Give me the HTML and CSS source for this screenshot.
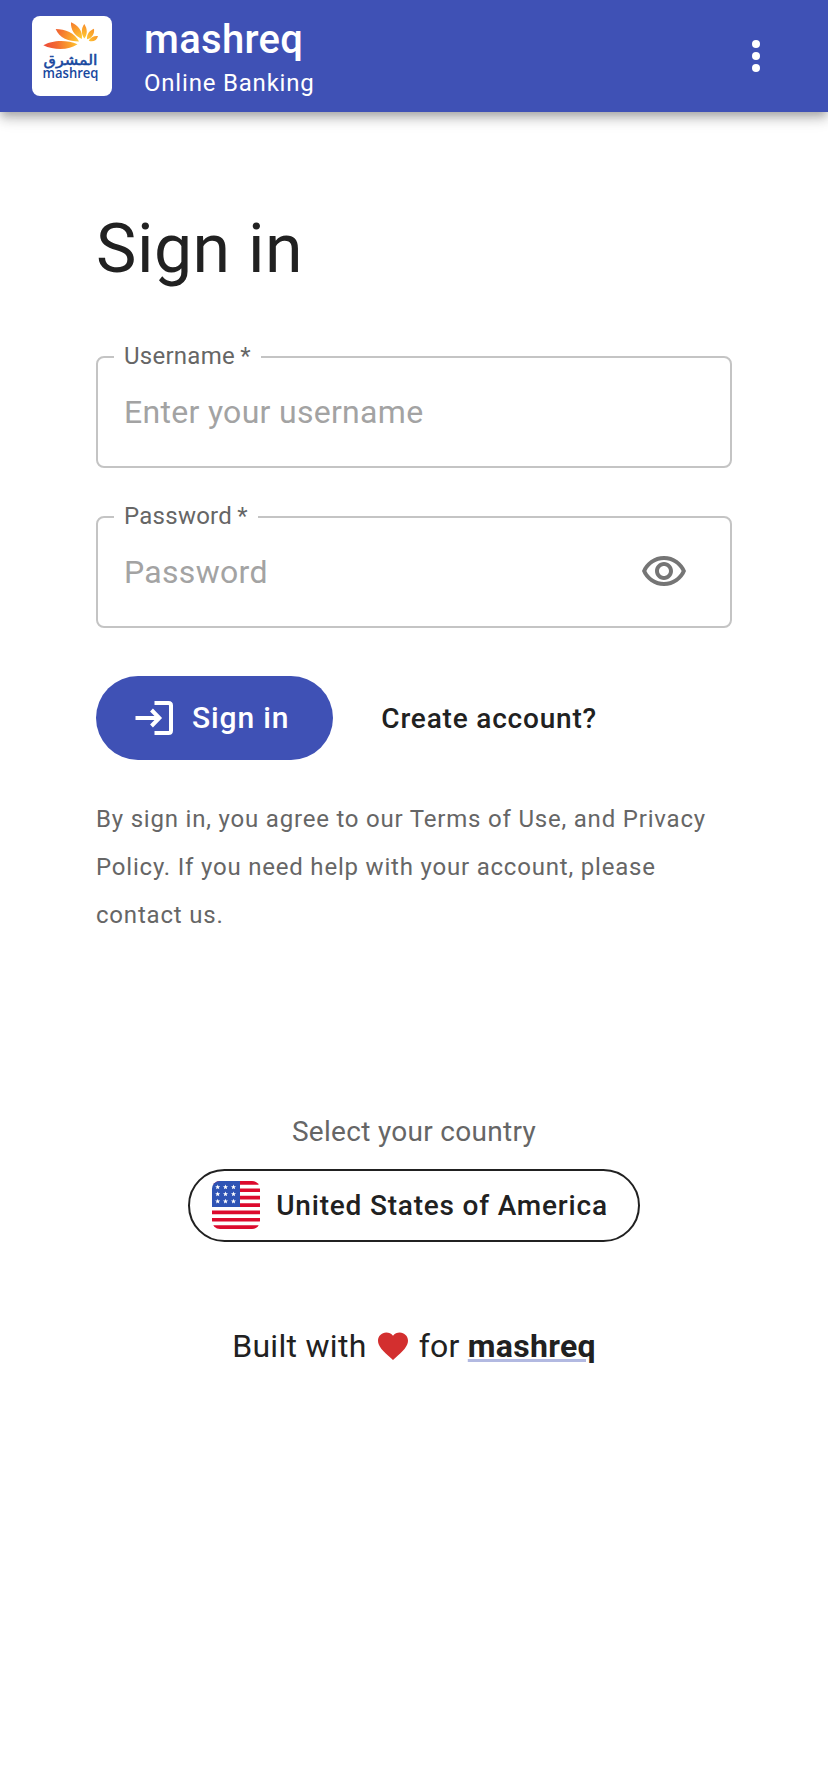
FILE: index.html
```html
<!DOCTYPE html>
<html lang="en">
<head>
<meta charset="utf-8">
<title>mashreq Online Banking</title>
<link rel="stylesheet" href="styles.css">
</head>
<body>
<header class="appbar">
  <svg class="logo" viewBox="32 16 80 80" aria-label="mashreq logo">
    <defs>
      <radialGradient id="flame" gradientUnits="userSpaceOnUse" cx="83" cy="42" r="38">
        <stop offset="0" stop-color="#ffdc3c"/>
        <stop offset=".35" stop-color="#fba22b"/>
        <stop offset=".7" stop-color="#f26a32"/>
        <stop offset="1" stop-color="#ee4e37"/>
      </radialGradient>
    </defs>
    <g fill="url(#flame)">
      <path d="M43.300 45.300C51 40.500 66 39 77.500 44.300C69 50.500 54 50.500 43.300 45.300Z"/>
      <path d="M55.700 29C65 29 75 33 79 41.500C69 41.500 59 38 55.700 29Z"/>
      <path d="M71 22.300C78 25.500 83 31 81.800 39C74.500 35.500 70.500 30 71 22.300Z"/>
      <path d="M84.300 24C87.700 29 87.500 34.500 84.300 38.500C81 34 81 28.500 84.300 24Z"/>
      <path d="M94 28.700C94.700 34 92 38 87 39.300C86.500 34 89.500 30.500 94 28.700Z"/>
      <path d="M98 36C97 40.500 93 42.300 88.700 40.800C90.500 37.300 94 35.500 98 36Z"/>
    </g>
    <text class="logo-ar" x="70.500" y="64.500" text-anchor="middle" textLength="54" lengthAdjust="spacingAndGlyphs">المشرق</text>
    <text class="logo-en" x="42.500" y="78" textLength="56" lengthAdjust="spacingAndGlyphs">mashreq</text>
  </svg>
  <div class="brand">
    <div class="brand-name">mashreq</div>
    <div class="brand-sub">Online Banking</div>
  </div>
  <svg class="more" viewBox="0 0 24 24" aria-label="More"><circle cx="12" cy="6" r="2"/><circle cx="12" cy="12" r="2"/><circle cx="12" cy="18" r="2"/></svg>
</header>
<main class="page">
  <h1 class="heading">Sign in</h1>
  <fieldset class="field">
    <legend class="label"><span class="label-text">Username&thinsp;*</span></legend>
    <span class="placeholder">Enter your username</span>
  </fieldset>
  <fieldset class="field">
    <legend class="label"><span class="label-text">Password&thinsp;*</span></legend>
    <span class="placeholder">Password</span>
    <svg class="eye" viewBox="0 0 24 24"><path d="M12 6c3.790 0 7.170 2.130 8.820 5.500C19.170 14.870 15.790 17 12 17s-7.170-2.130-8.820-5.500C4.830 8.130 8.210 6 12 6m0-2C7 4 2.730 7.110 1 11.500 2.730 15.890 7 19 12 19s9.270-3.110 11-7.500C21.270 7.110 17 4 12 4zm0 5c1.380 0 2.500 1.120 2.500 2.500S13.380 14 12 14s-2.500-1.120-2.500-2.500S10.620 9 12 9m0-2c-2.480 0-4.500 2.020-4.500 4.500S9.520 16 12 16s4.500-2.020 4.500-4.500S14.480 7 12 7z"/></svg>
  </fieldset>
  <div class="actions">
    <button class="primary">
      <svg class="login" viewBox="0 0 40 40"><path d="M20.500 5H34.500Q37 5 37 7.500V32.500Q37 35 34.500 35H20.500M1.500 20H25M17.500 12L25.300 20L17.500 28"/></svg>
      <span class="primary-text">Sign in</span>
    </button>
    <a class="create">Create account?</a>
  </div>
  <p class="terms">By sign in, you agree to our Terms of Use, and Privacy Policy. If you need help with your account, please contact us.</p>
  <div class="country">
    <div class="country-label">Select your country</div>
    <button class="country-button">
      <svg class="flag" viewBox="0 0 48 48">
        <defs>
          <clipPath id="round"><rect width="48" height="48" rx="8"/></clipPath>
          <path id="star" d="M0-2.500L.7-.8 2.500-.7 1.100.5 1.600 2.200 0 1.200-1.600 2.200-1.100.5-2.500-.7-.7-.8Z"/>
        </defs>
        <g clip-path="url(#round)">
          <rect width="48" height="48" fill="#fff"/>
          <path fill="#dc0a2d" d="M0 0H48V3.700H0ZM0 7.400H48V11.100H0ZM0 14.800H48V18.500H0ZM0 22.200H48V25.900H0ZM0 29.500H48V33.200H0ZM0 36.900H48V40.600H0ZM0 44.300H48V48H0Z"/>
          <rect width="28" height="26" fill="#2f54b5"/>
          <g fill="#fff">
            <use href="#star" x="5.700" y="6"/><use href="#star" x="13.500" y="6"/><use href="#star" x="21.500" y="6"/>
            <use href="#star" x="5.700" y="13"/><use href="#star" x="13.500" y="13"/><use href="#star" x="21.500" y="13"/>
            <use href="#star" x="5.700" y="20.300"/><use href="#star" x="13.500" y="20.300"/><use href="#star" x="21.500" y="20.300"/>
          </g>
        </g>
      </svg>
      <span>United States of America</span>
    </button>
  </div>
  <footer class="built">
    <span>Built with</span>
    <svg class="heart" viewBox="0 0 24 24"><path d="m12 21.350-1.450-1.320C5.400 15.360 2 12.280 2 8.500 2 5.420 4.420 3 7.500 3c1.740 0 3.410.81 4.500 2.090C13.090 3.810 14.760 3 16.500 3 19.580 3 22 5.420 22 8.500c0 3.780-3.400 6.860-8.550 11.540L12 21.350z"/></svg>
    <span>for</span>
    <a class="built-link">mashreq</a>
  </footer>
</main>
</body>
</html>
```
FILE: styles.css
```css
* { box-sizing: border-box; }
body {
  margin: 0;
  min-height: 1792px;
  background: #fff;
  color: #212121;
  font-family: Roboto, "Liberation Sans", sans-serif;
}
button { font-family: inherit; margin: 0; }
.appbar {
  display: flex;
  align-items: center;
  height: 112px;
  padding: 0 48px 0 32px;
  background: #3f51b5;
  color: #fff;
  box-shadow: 0 4px 8px -2px rgba(0,0,0,.2), 0 8px 10px rgba(0,0,0,.14), 0 2px 20px rgba(0,0,0,.12);
}
.logo { width: 80px; height: 80px; border-radius: 8px; background: #fff; overflow: visible; }
.logo-ar { font: 400 14px "DejaVu Sans", sans-serif; fill: #17479e; stroke: #17479e; stroke-width: .5px; }
.logo-en { font: 600 14px "Open Sans", "Noto Sans", sans-serif; fill: #17479e; }
.brand { flex: 1; margin-left: 32px; padding-top: 4px; }
.brand-name { font-size: 40px; font-weight: 500; line-height: 50px; letter-spacing: .3px; }
.brand-sub { font-size: 24px; line-height: 36px; letter-spacing: .8px; }
.more { width: 48px; height: 48px; fill: #fff; }
.page { padding: 95px 96px 0; }
.heading { margin: 0 0 55px; font-size: 68px; font-weight: 400; line-height: 84px; letter-spacing: .5px; }
.field {
  display: flex;
  align-items: center;
  justify-content: space-between;
  height: 122px;
  margin: 0 0 38px;
  padding: 0 42px 10px 26px;
  border: 2px solid #c4c4c4;
  border-radius: 8px;
}
.label {
  height: 22px;
  margin-left: -10px;
  padding: 0 10px;
  color: #666;
  font-size: 24px;
  line-height: 20px;
  letter-spacing: .26px;
}
.placeholder { color: #a3a3a3; font-size: 32px; line-height: 46px; letter-spacing: .3px; }
.eye { width: 48px; height: 48px; fill: #757575; }
.actions { display: flex; align-items: center; gap: 48px; margin-top: 48px; }
.primary {
  display: flex;
  align-items: center;
  gap: 18px;
  height: 84px;
  padding: 0 44px 0 38px;
  border: 0;
  border-radius: 42px;
  background: #3f51b5;
  color: #fff;
  font-size: 30px;
  font-weight: 500;
  letter-spacing: .86px;
}
.primary-text { padding-bottom: 2px; }
.login { width: 40px; height: 40px; fill: none; stroke: #fff; stroke-width: 4; }
.create { font-size: 28px; font-weight: 500; letter-spacing: .8px; }
.terms { margin: 35px 0 0; color: #666; font-size: 24px; line-height: 48px; letter-spacing: .8px; }
.country { display: flex; flex-direction: column; align-items: center; margin-top: 169px; }
.country-label { color: #666; font-size: 28px; line-height: 48px; letter-spacing: .3px; }
.country-button {
  display: flex;
  align-items: center;
  gap: 16px;
  height: 73px;
  margin-top: 13px;
  padding: 0 30px 0 22px;
  border: 2px solid #212121;
  border-radius: 37px;
  background: transparent;
  color: #212121;
  font-size: 28px;
  font-weight: 500;
  letter-spacing: .8px;
}
.flag { width: 48px; height: 48px; margin-bottom: 1px; }
.built {
  display: flex;
  align-items: center;
  justify-content: center;
  gap: 8px;
  margin-top: 80px;
  font-size: 32px;
  line-height: 48px;
  letter-spacing: .3px;
}
.heart { width: 36px; height: 36px; fill: #d32f2f; }
.built-link { font-weight: 700; text-decoration: underline 3px #b2b9e1; }
```
